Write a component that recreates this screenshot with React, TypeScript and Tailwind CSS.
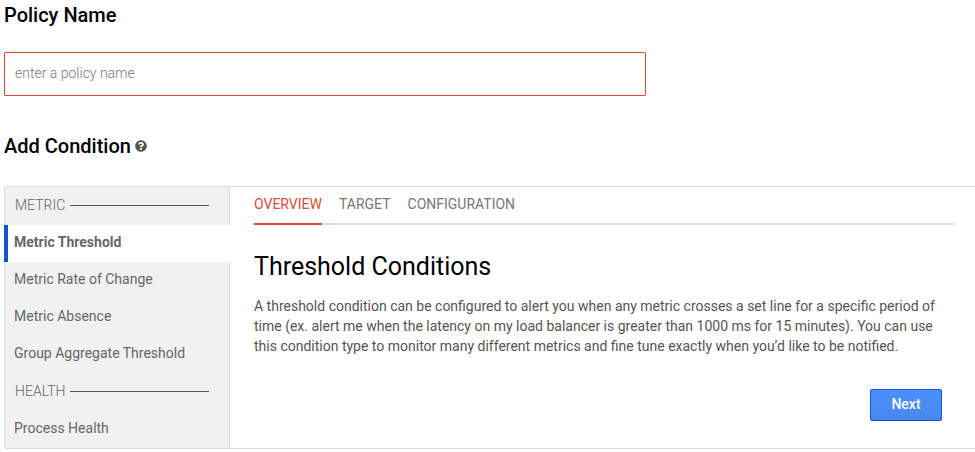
import { useState } from "react";
import { FaQuestionCircle } from "react-icons/fa";

const groups = [
  {
    title: "METRIC",
    items: [
      "Metric Threshold",
      "Metric Rate of Change",
      "Metric Absence",
      "Group Aggregate Threshold",
    ],
  },
  { title: "HEALTH", items: ["Process Health"] },
];

const tabs = ["OVERVIEW", "TARGET", "CONFIGURATION"];

function Sidebar() {
  const [selected, setSelected] = useState("Metric Threshold");
  return (
    <nav aria-label="Condition types" className="flex w-[226px] shrink-0 flex-col">
      {groups.map((group) => (
        <section key={group.title}>
          <div className="flex h-[38px] items-center gap-[5px] border-x border-[#dcdcdc] bg-[#f1f1f1] pr-5 pb-0.5 pl-2.5">
            <h3 className="text-sm font-light text-[#666666]">{group.title}</h3>
            <span className="mt-px h-px flex-1 bg-[#555555]" />
          </div>
          {group.items.map((item) => (
            <button
              key={item}
              type="button"
              onClick={() => setSelected(item)}
              className={
                item === selected
                  ? "block h-[37px] w-full border-l-4 border-[#1155cc] bg-white pb-1 pl-1.5 text-left text-sm font-bold text-[#666666]"
                  : "block h-[37px] w-full border-x border-[#dcdcdc] bg-[#f1f1f1] pb-1 pl-[9px] text-left text-sm text-[#666666]"
              }
            >
              {item}
            </button>
          ))}
        </section>
      ))}
    </nav>
  );
}

function Details() {
  const [active, setActive] = useState("OVERVIEW");
  return (
    <div className="min-w-0 flex-1 pr-[21px] pl-6">
      <div role="tablist" className="flex h-[38px] gap-[17px] border-b-2 border-[#dddddd]">
        {tabs.map((tab) => (
          <button
            key={tab}
            type="button"
            role="tab"
            aria-selected={tab === active}
            onClick={() => setActive(tab)}
            className={
              tab === active
                ? "-mb-0.5 border-b-2 border-[#dd4b39] pb-0.5 text-sm text-[#dd4b39]"
                : "-mb-0.5 border-b-2 border-transparent pb-0.5 text-sm text-[#777777]"
            }
          >
            {tab}
          </button>
        ))}
      </div>
      <h2 className="mt-[26px] text-[25px] leading-8">Threshold Conditions</h2>
      <p className="mt-[13px] text-sm leading-5 text-[#555555]">
        A threshold condition can be configured to alert you when any metric crosses a set line for a
        specific period of time (ex. alert me when the latency on my load balancer is greater than 1000
        ms for 15 minutes). You can use this condition type to monitor many different metrics and fine
        tune exactly when you’d like to be notified.
      </p>
      <div className="mt-[33px] flex justify-end pr-3">
        <button
          type="button"
          className="h-8 w-[72px] rounded-xs border border-[#0b57e0] bg-linear-to-b from-[#4d90fe] to-[#4787ed] pb-0.5 text-sm font-medium text-white"
        >
          Next
        </button>
      </div>
    </div>
  );
}

export default function App() {
  return (
    <main className="overflow-hidden bg-white pl-1 font-['Roboto',sans-serif] text-black">
      <label htmlFor="policy-name" className="block pt-px text-xl font-medium">
        Policy Name
      </label>
      <input
        id="policy-name"
        type="text"
        placeholder="enter a policy name"
        className="mt-[23px] block h-11 w-full max-w-[642px] rounded-[1px] border border-[#dd4b39] px-2.5 pb-0.5 text-sm font-light placeholder:text-[#777777]"
      />
      <div className="mt-9 flex items-center gap-1">
        <h2 className="text-xl font-medium">Add Condition</h2>
        <button type="button" aria-label="About conditions" className="text-[#555555]">
          <FaQuestionCircle size={12} />
        </button>
      </div>
      <div className="mt-[26px] flex rounded-l-[3px] border-y border-[#dcdcdc]">
        <Sidebar />
        <Details />
      </div>
    </main>
  );
}
